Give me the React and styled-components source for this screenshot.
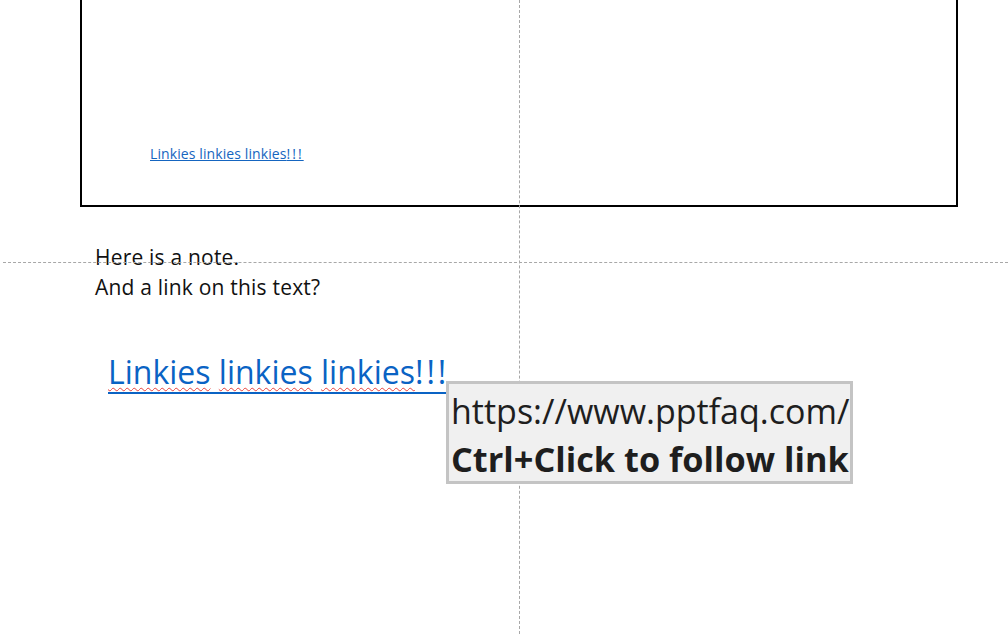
import React from "react";
import styled, { createGlobalStyle } from "styled-components";

const GlobalStyle = createGlobalStyle`
  html, body {
    margin: 0;
    padding: 0;
    background: #fff;
    font-family: "Open Sans", "Noto Sans", sans-serif;
  }
`;

const Page = styled.div`
  position: relative;
  width: 1008px;
  height: 634px;
  overflow: hidden;
  background: #fff;
`;

const Slide = styled.div`
  box-sizing: border-box;
  width: 878px;
  height: 209px;
  margin: -2px 0 0 80px;
  border: 2px solid #000;
  padding: 142px 0 0 68px;
`;

const SlideLink = styled.a`
  font-size: 14px;
  line-height: 19px;
  letter-spacing: 0.1px;
  color: #1565c0;
  text-decoration: underline;
`;

const Bang = styled.span`
  letter-spacing: ${(p) => p.spacing}px;
`;

const Notes = styled.div`
  padding: 35px 0 0 95px;
  font-size: 21px;
  line-height: 30px;
  letter-spacing: 0.2px;
  color: #111;
`;

const BigLink = styled.div`
  margin: 49px 0 0 108px;
  display: inline-block;
  font-size: 32px;
  line-height: 41px;
  color: #0a63c4;
  border-bottom: 2px solid #0a63c4;
`;

const Squiggle = styled.span`
  text-decoration: underline wavy #e8413c;
  text-decoration-thickness: 1px;
  text-underline-offset: 3px;
`;

const GuideV = styled.div`
  position: absolute;
  top: 0;
  bottom: 0;
  left: 519px;
  border-left: 1px dashed #a8a8a8;
`;

const GuideH = styled.div`
  position: absolute;
  left: 3px;
  right: 0;
  top: 262px;
  border-top: 1px dashed #a8a8a8;
`;

const Tooltip = styled.div`
  position: absolute;
  left: 446px;
  top: 381px;
  box-sizing: border-box;
  width: 407px;
  height: 103px;
  background: #f0f0f0;
  border: 3px solid #c4c4c4;
  padding: 4px 0 0 2px;
  color: #1e1e1e;
  white-space: nowrap;
`;

const TipLine = styled.div`
  font-size: ${(p) => p.size}px;
  font-weight: ${(p) => (p.bold ? 700 : 400)};
  line-height: 47px;
`;

const App = () => {
  return (
    <Page>
      <GlobalStyle />
      <Slide>
        <SlideLink>
          Linkies linkies linkies<Bang spacing={2}>!!!</Bang>
        </SlideLink>
      </Slide>
      <Notes>
        Here is a note.
        <br />
        And a link on this text?
      </Notes>
      <BigLink>
        <Squiggle>Linkies</Squiggle> <Squiggle>linkies</Squiggle>{" "}
        <Squiggle>linkies</Squiggle>
        <Bang spacing={3}>!!!</Bang>
      </BigLink>
      <GuideV />
      <GuideH />
      <Tooltip>
        <TipLine size={34}>https://www.pptfaq.com/</TipLine>
        <TipLine size={34.3} bold>
          Ctrl+Click to follow link
        </TipLine>
      </Tooltip>
    </Page>
  );
};

export default App;
